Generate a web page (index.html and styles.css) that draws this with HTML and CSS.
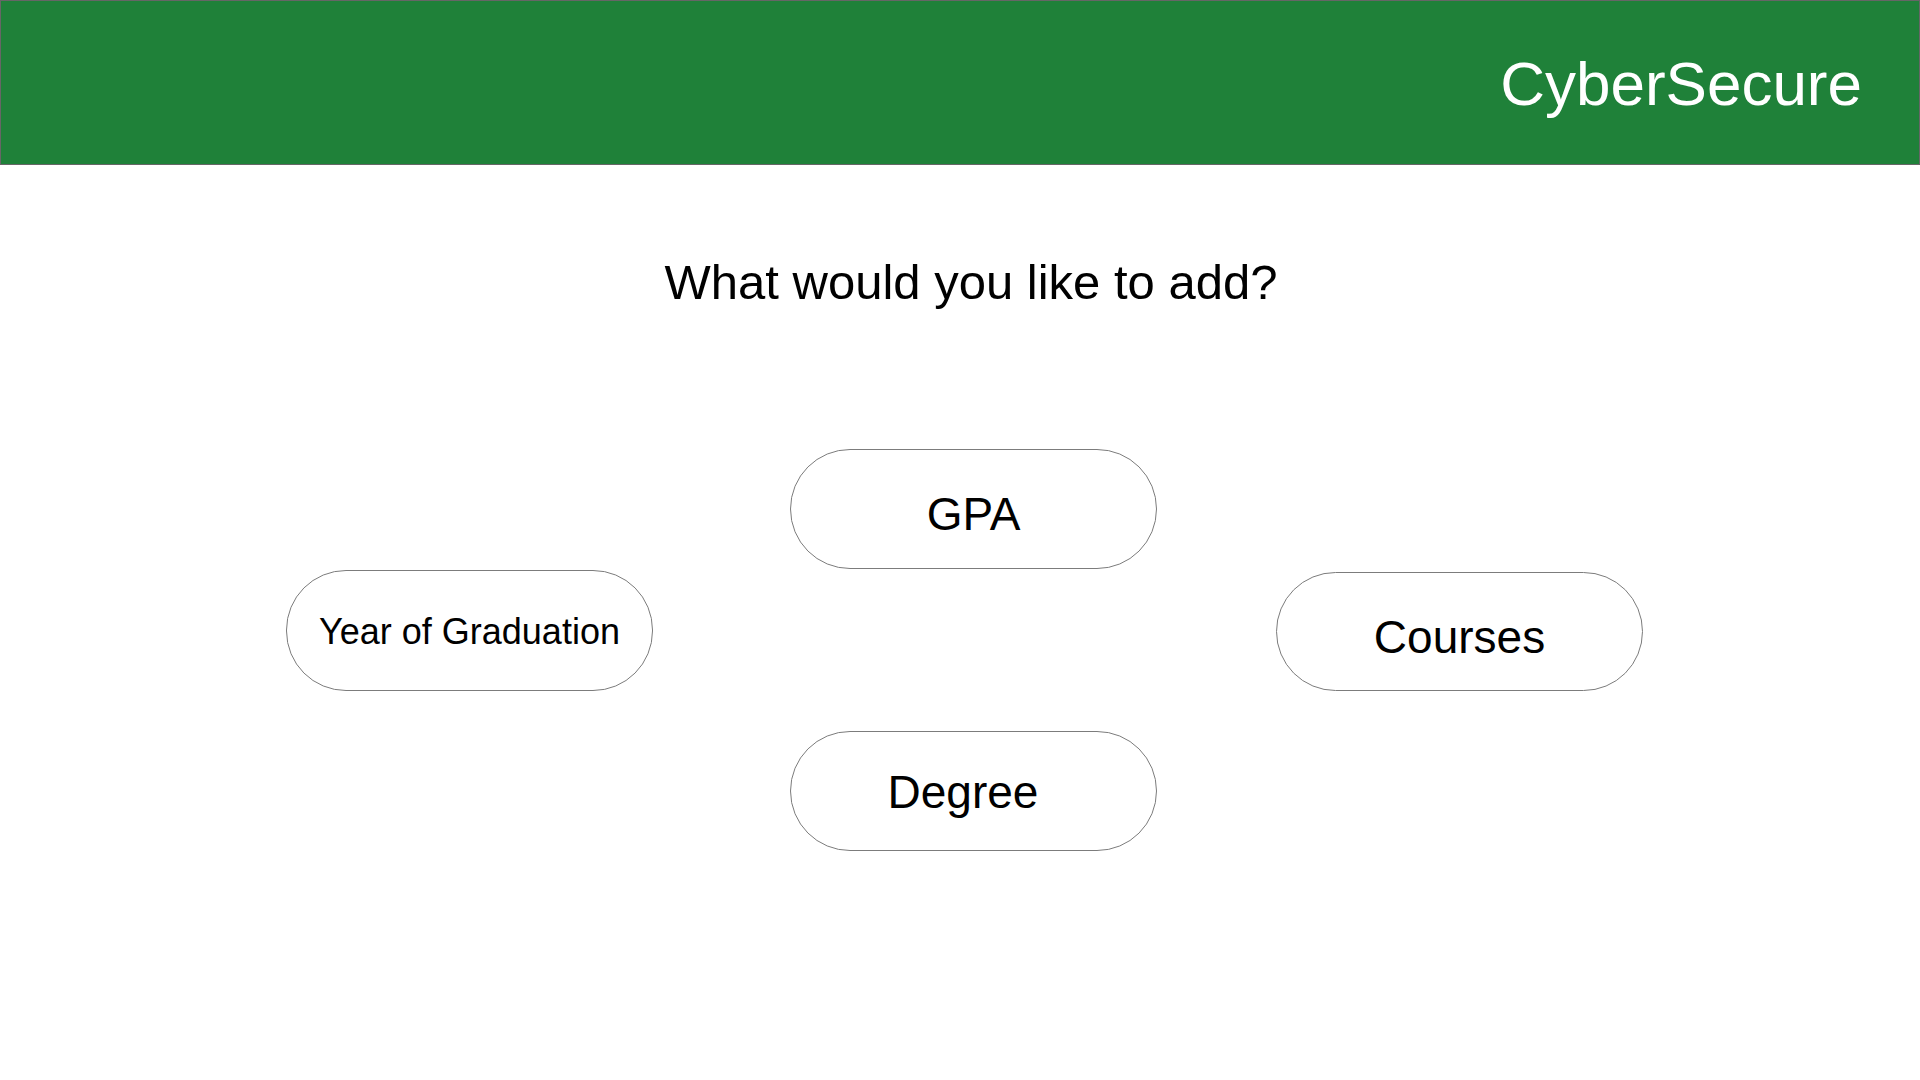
FILE: index.html
```html
<!DOCTYPE html>
<html lang="en">
<head>
<meta charset="utf-8">
<title>CyberSecure</title>
<link rel="stylesheet" href="styles.css">
</head>
<body>
<header class="topbar">
  <div class="brand">CyberSecure</div>
</header>
<main class="content">
  <h1 class="question">What would you like to add?</h1>
  <div class="options">
    <button class="pill pill-gpa pill-low">GPA</button>
    <button class="pill pill-year">Year of Graduation</button>
    <button class="pill pill-courses pill-low">Courses</button>
    <button class="pill pill-degree">Degree</button>
  </div>
</main>
</body>
</html>
```

FILE: styles.css
```css
html, body {
  margin: 0;
  padding: 0;
  background: #ffffff;
}

body {
  font-family: "Liberation Sans", Arial, Helvetica, sans-serif;
  color: #000000;
}

.topbar {
  box-sizing: border-box;
  height: 165px;
  background: #1f8139;
  border: 1px solid #666666;
  display: flex;
  justify-content: flex-end;
  padding: 48px 57px 45px 0;
}

.brand {
  color: #ffffff;
  font-size: 62px;
  line-height: 70px;
}

.content {
  display: flex;
  flex-direction: column;
}

.question {
  margin: 89px 0 0 0;
  padding-left: 22px;
  text-align: center;
  font-size: 49px;
  line-height: 57px;
  font-weight: normal;
}

.options {
  margin: 138px 0 0 286px;
  display: grid;
  grid-template-columns: 365px 139px 367px 119px 367px;
  grid-template-rows: 120px 122px 40px 120px;
}

.pill {
  box-sizing: border-box;
  width: 367px;
  height: 120px;
  border: 1px solid #7c7c7c;
  border-radius: 60px;
  background: #ffffff;
  font-family: "Liberation Sans", Arial, Helvetica, sans-serif;
  font-size: 46px;
  color: #000000;
  display: flex;
  align-items: center;
  justify-content: center;
  padding: 2px 0 0 0;
  margin: 0;
}

.pill-low {
  padding-top: 10px;
}

.pill-gpa {
  grid-column: 3;
  grid-row: 1;
}

.pill-year {
  grid-column: 1;
  grid-row: 2;
  margin-top: 1px;
  height: 121px;
  font-size: 36px;
}

.pill-courses {
  grid-column: 5;
  grid-row: 2;
  margin-top: 3px;
  height: 119px;
}

.pill-degree {
  grid-column: 3;
  grid-row: 4;
  padding-right: 21px;
}
```
